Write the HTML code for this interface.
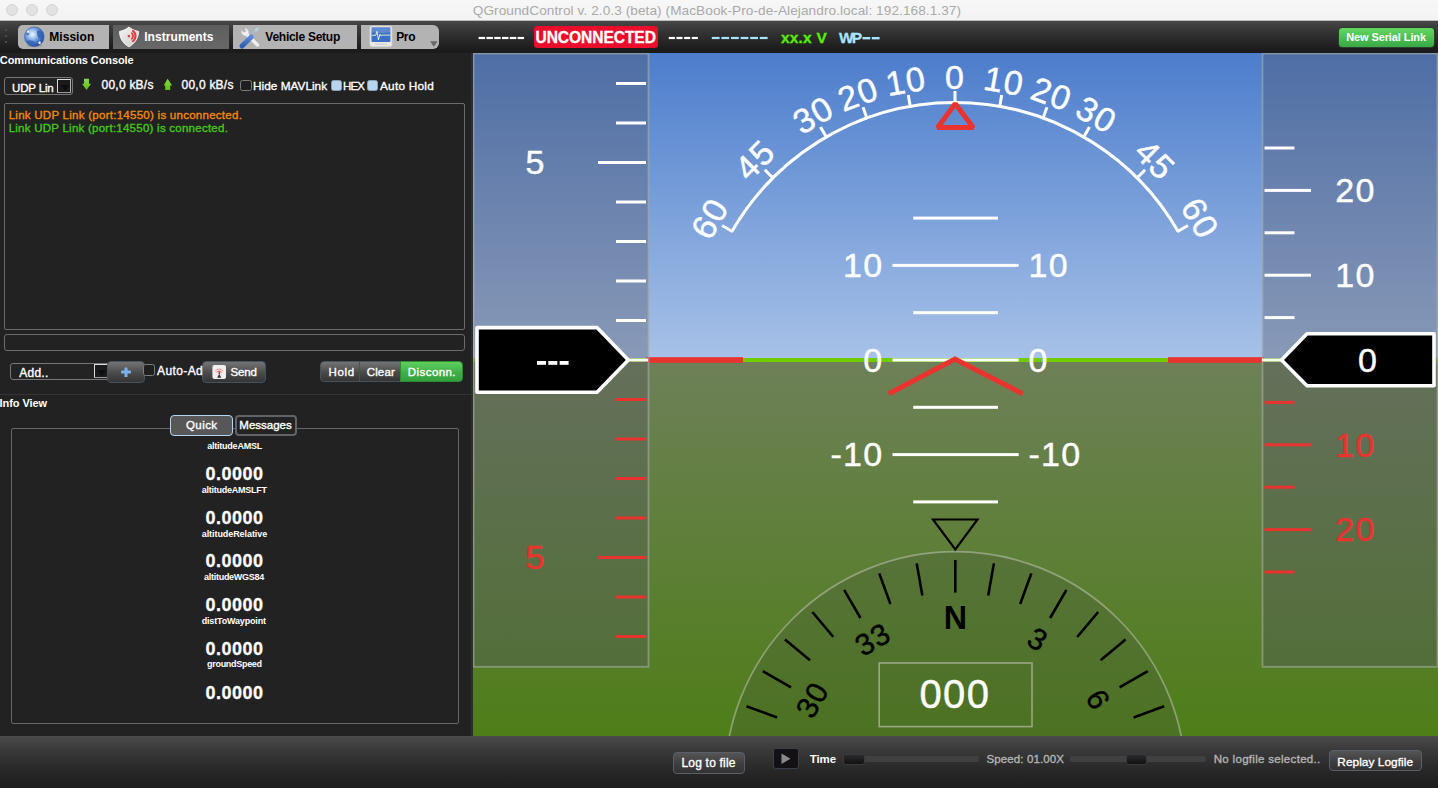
<!DOCTYPE html>
<html><head><meta charset="utf-8">
<style>
*{margin:0;padding:0;box-sizing:border-box}
html,body{width:1438px;height:788px;overflow:hidden;background:#222;font-family:"Liberation Sans",sans-serif}
.a{position:absolute}
#title{left:0;top:0;width:1438px;height:21px;background:linear-gradient(#f7f7f7,#f3f3f3);border-bottom:1px solid #bdbdbd}
.tl{width:12px;height:12px;border-radius:50%;background:#e2e2e2;border:1px solid #d3d3d3;top:4px}
#toolbar{left:0;top:21px;width:1438px;height:32px;background:linear-gradient(#474747,#333 35%,#1d1d1d 85%,#1a1a1a);}
.grip{left:5px;width:2px;height:2px;background:#4a4a4a}
.tab{top:25px;height:24px;background:#b3b3b3}
#left{left:0;top:53px;width:473px;height:683px;background:#222}
#bottom{left:0;top:736px;width:1438px;height:52px;background:linear-gradient(#4b4b4b,#3a3a3a 25%,#262626 70%,#1e1e1e)}
.box{border:1.2px solid #6c6c6c;border-radius:2px;background:#222}
.combo{border:1.5px solid #777;border-radius:3px;background:#232323}
.csq{border:1.5px solid #dcdcdc;border-bottom-color:#9a9a9a;border-right-color:#b0b0b0;background:#1a1a1a}
.tri{width:0;height:0;border-left:4px solid transparent;border-right:4px solid transparent;border-top:6px solid #0d0d0d}
.cb{border:1.3px solid #7c7c7c;border-radius:2.5px;background:#1f1f1f}
.cbf{border:1px solid #8aa0b4;border-radius:2.5px;background:#b9d6ee}
.btn{border:1px solid #46525c;border-radius:4px;background:linear-gradient(#747474,#4a4a4a 55%,#353535)}
.gbtn{border:1px solid #2f8a36;border-radius:4px;background:linear-gradient(#5fd05e,#3eb048 55%,#33a03c)}
.bbtn{border:1px solid #596068;border-radius:4px;background:linear-gradient(#555,#3c3c3c 60%,#333)}
</style></head><body>
<div id="title" class="a">
  <div class="a tl" style="left:6px"></div>
  <div class="a tl" style="left:26px"></div>
  <div class="a tl" style="left:46px"></div>
</div>
<div id="toolbar" class="a"></div>
<div class="a grip" style="top:29px"></div><div class="a grip" style="top:35px"></div><div class="a grip" style="top:41px"></div>
<div class="a tab" style="left:18px;width:91px;border-radius:5px 0 0 5px"></div>
<div class="a tab" style="left:113px;width:116px;background:linear-gradient(#5d5d5d,#686868)"></div>
<div class="a tab" style="left:233px;width:124px"></div>
<div class="a tab" style="left:361px;width:78px;border-radius:0 6px 6px 0"></div>
<div class="a" style="left:1337.5px;top:26.5px;width:97.5px;height:21px;border-radius:4px;border:1px solid #2c3c2e;background:linear-gradient(#66d662,#4cc052 50%,#3aa846)"></div>
<div class="a" style="left:534px;top:26px;width:124px;height:21.6px;border-radius:3.5px;background:#ea0d2c"></div>
<div id="left" class="a"></div>
<div class="a" style="left:470.8px;top:53px;width:2.2px;height:683px;background:#2e2e30"></div>
<!-- UDP combo -->
<div class="a combo" style="left:4.2px;top:77px;width:68.5px;height:17.7px"></div>
<div class="a csq" style="left:57px;top:79px;width:14px;height:14px"><div class="a tri" style="left:2.6px;top:4.5px"></div></div>
<!-- checkboxes -->
<div class="a cb" style="left:240px;top:79.6px;width:11.5px;height:11px"></div>
<div class="a cbf" style="left:330.5px;top:79.6px;width:11.2px;height:11px"></div>
<div class="a cbf" style="left:366.5px;top:79.6px;width:11px;height:11px"></div>
<!-- console -->
<div class="a box" style="left:4.3px;top:103.4px;width:460.5px;height:226.8px"></div>
<div class="a box" style="left:4.3px;top:334px;width:460.5px;height:17.4px;border-radius:3px"></div>
<!-- Add combo -->
<div class="a combo" style="left:10.3px;top:362.5px;width:100px;height:17px"></div>
<div class="a csq" style="left:94px;top:364px;width:14px;height:14px"><div class="a tri" style="left:2.6px;top:4.5px"></div></div>
<div class="a btn" style="left:107.3px;top:361.2px;width:37.4px;height:21.6px"></div>
<div class="a cb" style="left:143.3px;top:364.1px;width:11.6px;height:11.7px"></div>
<div class="a btn" style="left:202.2px;top:361.1px;width:63.5px;height:21.6px"></div>
<div class="a btn" style="left:320.4px;top:361.3px;width:39.5px;height:21.2px;border-radius:4px 0 0 4px"></div>
<div class="a btn" style="left:359.2px;top:361.3px;width:42px;height:21.2px;border-radius:0"></div>
<div class="a gbtn" style="left:400.1px;top:361.3px;width:62.7px;height:21.2px;border-radius:0 4px 4px 0"></div>
<!-- separator -->
<div class="a" style="left:0;top:394px;width:470.8px;height:1.2px;background:#343434"></div>
<!-- info frame -->
<div class="a box" style="left:10.5px;top:428px;width:448px;height:296px;border-color:#63676b"></div>
<div class="a" style="left:170.3px;top:415.3px;width:63.2px;height:20.3px;border:1.6px solid #b4d6f2;border-radius:4px;background:#575757"></div>
<div class="a" style="left:234.8px;top:415.3px;width:62.7px;height:20.3px;border:2px solid #606468;border-radius:4px;background:#232323"></div>
<svg class="a" style="left:0;top:0" width="1438" height="788" viewBox="0 0 1438 788" font-family="Liberation Sans, sans-serif">
<defs>
<linearGradient id="sky" x1="0" y1="53" x2="0" y2="360" gradientUnits="userSpaceOnUse"><stop offset="0" stop-color="#4c7dcc"/><stop offset="1" stop-color="#a8c2e8"/></linearGradient>
<linearGradient id="gnd" x1="0" y1="360" x2="0" y2="736" gradientUnits="userSpaceOnUse"><stop offset="0" stop-color="#6e8058"/><stop offset="1" stop-color="#4e7e18"/></linearGradient>
<clipPath id="hudclip"><rect x="473" y="53" width="965" height="683"/></clipPath>
</defs>
<g clip-path="url(#hudclip)">
<rect x="473" y="53" width="965" height="307" fill="url(#sky)"/>
<rect x="473" y="360" width="965" height="376" fill="url(#gnd)"/>
<rect x="473" y="358" width="965" height="4" fill="#70cc00"/>
<rect x="646" y="357.2" width="97" height="5.6" fill="#e8332f"/>
<rect x="1168" y="357.2" width="96" height="5.6" fill="#e8332f"/>
<rect x="913.2" y="500.40" width="84.8" height="3" fill="#ffffff"/>
<rect x="892.5" y="453.10" width="126.2" height="3" fill="#ffffff"/>
<g transform="translate(883.50,454.60) rotate(0.00) scale(1.0,1)"><text x="0" y="11.70" text-anchor="end" font-size="34" letter-spacing="1.3" font-weight="normal" fill="#ffffff" stroke="#ffffff" stroke-width="0.45">-10</text></g>
<g transform="translate(1028.50,454.60) rotate(0.00) scale(1.0,1)"><text x="0" y="11.70" text-anchor="start" font-size="34" letter-spacing="1.3" font-weight="normal" fill="#ffffff" stroke="#ffffff" stroke-width="0.45">-10</text></g>
<rect x="913.2" y="405.80" width="84.8" height="3" fill="#ffffff"/>
<rect x="892.5" y="358.50" width="126.2" height="3" fill="#ffffff"/>
<g transform="translate(883.50,360.00) rotate(0.00) scale(1.0,1)"><text x="0" y="11.70" text-anchor="end" font-size="34" letter-spacing="1.3" font-weight="normal" fill="#ffffff" stroke="#ffffff" stroke-width="0.45">0</text></g>
<g transform="translate(1028.50,360.00) rotate(0.00) scale(1.0,1)"><text x="0" y="11.70" text-anchor="start" font-size="34" letter-spacing="1.3" font-weight="normal" fill="#ffffff" stroke="#ffffff" stroke-width="0.45">0</text></g>
<rect x="913.2" y="311.20" width="84.8" height="3" fill="#ffffff"/>
<rect x="892.5" y="263.90" width="126.2" height="3" fill="#ffffff"/>
<g transform="translate(883.50,265.40) rotate(0.00) scale(1.0,1)"><text x="0" y="11.70" text-anchor="end" font-size="34" letter-spacing="1.3" font-weight="normal" fill="#ffffff" stroke="#ffffff" stroke-width="0.45">10</text></g>
<g transform="translate(1028.50,265.40) rotate(0.00) scale(1.0,1)"><text x="0" y="11.70" text-anchor="start" font-size="34" letter-spacing="1.3" font-weight="normal" fill="#ffffff" stroke="#ffffff" stroke-width="0.45">10</text></g>
<rect x="913.2" y="216.60" width="84.8" height="3" fill="#ffffff"/>
<polyline points="888.8,393.7 955,359 1022.4,393.7" fill="none" stroke="#e8332f" stroke-width="5"/>
<path d="M732.00,231.25 A257.5,257.5 0 0 1 1178.00,231.25" fill="none" stroke="#ffffff" stroke-width="3"/>
<line x1="732.86" y1="231.75" x2="722.04" y2="225.50" stroke="#ffffff" stroke-width="3"/>
<g transform="translate(709.91,218.50) rotate(-60.00) scale(1.0,1)"><text x="0" y="11.70" text-anchor="middle" font-size="34" letter-spacing="1.3" font-weight="normal" fill="#ffffff" stroke="#ffffff" stroke-width="0.45">60</text></g>
<line x1="773.63" y1="178.63" x2="764.79" y2="169.79" stroke="#ffffff" stroke-width="3"/>
<g transform="translate(754.89,159.89) rotate(-45.00) scale(1.0,1)"><text x="0" y="11.70" text-anchor="middle" font-size="34" letter-spacing="1.3" font-weight="normal" fill="#ffffff" stroke="#ffffff" stroke-width="0.45">45</text></g>
<line x1="826.75" y1="137.86" x2="820.50" y2="127.04" stroke="#ffffff" stroke-width="3"/>
<g transform="translate(813.50,114.91) rotate(-30.00) scale(1.0,1)"><text x="0" y="11.70" text-anchor="middle" font-size="34" letter-spacing="1.3" font-weight="normal" fill="#ffffff" stroke="#ffffff" stroke-width="0.45">30</text></g>
<line x1="867.27" y1="118.97" x2="863.00" y2="107.22" stroke="#ffffff" stroke-width="3"/>
<g transform="translate(858.21,94.07) rotate(-20.00) scale(1.0,1)"><text x="0" y="11.70" text-anchor="middle" font-size="34" letter-spacing="1.3" font-weight="normal" fill="#ffffff" stroke="#ffffff" stroke-width="0.45">20</text></g>
<line x1="910.46" y1="107.40" x2="908.29" y2="95.09" stroke="#ffffff" stroke-width="3"/>
<g transform="translate(905.86,81.30) rotate(-10.00) scale(1.0,1)"><text x="0" y="11.70" text-anchor="middle" font-size="34" letter-spacing="1.3" font-weight="normal" fill="#ffffff" stroke="#ffffff" stroke-width="0.45">10</text></g>
<line x1="955.00" y1="103.50" x2="955.00" y2="91.00" stroke="#ffffff" stroke-width="3"/>
<g transform="translate(955.00,77.00) rotate(0.00) scale(1.0,1)"><text x="0" y="11.70" text-anchor="middle" font-size="34" letter-spacing="1.3" font-weight="normal" fill="#ffffff" stroke="#ffffff" stroke-width="0.45">0</text></g>
<line x1="999.54" y1="107.40" x2="1001.71" y2="95.09" stroke="#ffffff" stroke-width="3"/>
<g transform="translate(1004.14,81.30) rotate(10.00) scale(1.0,1)"><text x="0" y="11.70" text-anchor="middle" font-size="34" letter-spacing="1.3" font-weight="normal" fill="#ffffff" stroke="#ffffff" stroke-width="0.45">10</text></g>
<line x1="1042.73" y1="118.97" x2="1047.00" y2="107.22" stroke="#ffffff" stroke-width="3"/>
<g transform="translate(1051.79,94.07) rotate(20.00) scale(1.0,1)"><text x="0" y="11.70" text-anchor="middle" font-size="34" letter-spacing="1.3" font-weight="normal" fill="#ffffff" stroke="#ffffff" stroke-width="0.45">20</text></g>
<line x1="1083.25" y1="137.86" x2="1089.50" y2="127.04" stroke="#ffffff" stroke-width="3"/>
<g transform="translate(1096.50,114.91) rotate(30.00) scale(1.0,1)"><text x="0" y="11.70" text-anchor="middle" font-size="34" letter-spacing="1.3" font-weight="normal" fill="#ffffff" stroke="#ffffff" stroke-width="0.45">30</text></g>
<line x1="1136.37" y1="178.63" x2="1145.21" y2="169.79" stroke="#ffffff" stroke-width="3"/>
<g transform="translate(1155.11,159.89) rotate(45.00) scale(1.0,1)"><text x="0" y="11.70" text-anchor="middle" font-size="34" letter-spacing="1.3" font-weight="normal" fill="#ffffff" stroke="#ffffff" stroke-width="0.45">45</text></g>
<line x1="1177.14" y1="231.75" x2="1187.96" y2="225.50" stroke="#ffffff" stroke-width="3"/>
<g transform="translate(1200.09,218.50) rotate(60.00) scale(1.0,1)"><text x="0" y="11.70" text-anchor="middle" font-size="34" letter-spacing="1.3" font-weight="normal" fill="#ffffff" stroke="#ffffff" stroke-width="0.45">60</text></g>
<polygon points="955.3,103.8 937.6,127.4 973.2,127.4" fill="none" stroke="#e8332f" stroke-width="5" stroke-linejoin="bevel"/>
<rect x="473.5" y="53.5" width="175" height="613.3" fill="rgba(83,84,97,0.36)" stroke="rgba(165,172,165,0.62)" stroke-width="1.8"/>
<rect x="1262.5" y="53.5" width="175" height="613.3" fill="rgba(83,84,97,0.36)" stroke="rgba(165,172,165,0.62)" stroke-width="1.8"/>
<rect x="616" y="319.00" width="30" height="3" fill="#ffffff"/>
<rect x="616" y="398.00" width="30" height="3" fill="#e8332f"/>
<rect x="616" y="279.50" width="30" height="3" fill="#ffffff"/>
<rect x="616" y="437.50" width="30" height="3" fill="#e8332f"/>
<rect x="616" y="240.00" width="30" height="3" fill="#ffffff"/>
<rect x="616" y="477.00" width="30" height="3" fill="#e8332f"/>
<rect x="616" y="200.50" width="30" height="3" fill="#ffffff"/>
<rect x="616" y="516.50" width="30" height="3" fill="#e8332f"/>
<rect x="598" y="161.00" width="48" height="3" fill="#ffffff"/>
<g transform="translate(535.50,162.50) rotate(0.00) scale(1.0,1)"><text x="0" y="11.70" text-anchor="middle" font-size="34" letter-spacing="1.3" font-weight="normal" fill="#ffffff" stroke="#ffffff" stroke-width="0.45">5</text></g>
<rect x="598" y="556.00" width="48" height="3" fill="#e8332f"/>
<g transform="translate(535.50,557.50) rotate(0.00) scale(1.0,1)"><text x="0" y="11.70" text-anchor="middle" font-size="34" letter-spacing="1.3" font-weight="normal" fill="#e8332f" stroke="#e8332f" stroke-width="0.45">5</text></g>
<rect x="616" y="121.50" width="30" height="3" fill="#ffffff"/>
<rect x="616" y="595.50" width="30" height="3" fill="#e8332f"/>
<rect x="616" y="82.00" width="30" height="3" fill="#ffffff"/>
<rect x="616" y="635.00" width="30" height="3" fill="#e8332f"/>
<rect x="1264.5" y="316.10" width="30" height="3" fill="#ffffff"/>
<rect x="1264.5" y="400.90" width="30" height="3" fill="#e8332f"/>
<rect x="1264.5" y="273.70" width="46.5" height="3" fill="#ffffff"/>
<g transform="translate(1355.50,275.20) rotate(0.00) scale(1.0,1)"><text x="0" y="11.70" text-anchor="middle" font-size="34" letter-spacing="1.3" font-weight="normal" fill="#ffffff" stroke="#ffffff" stroke-width="0.45">10</text></g>
<rect x="1264.5" y="443.30" width="46.5" height="3" fill="#e8332f"/>
<g transform="translate(1355.50,444.80) rotate(0.00) scale(1.0,1)"><text x="0" y="11.70" text-anchor="middle" font-size="34" letter-spacing="1.3" font-weight="normal" fill="#e8332f" stroke="#e8332f" stroke-width="0.45">10</text></g>
<rect x="1264.5" y="231.30" width="30" height="3" fill="#ffffff"/>
<rect x="1264.5" y="485.70" width="30" height="3" fill="#e8332f"/>
<rect x="1264.5" y="188.90" width="46.5" height="3" fill="#ffffff"/>
<g transform="translate(1355.50,190.40) rotate(0.00) scale(1.0,1)"><text x="0" y="11.70" text-anchor="middle" font-size="34" letter-spacing="1.3" font-weight="normal" fill="#ffffff" stroke="#ffffff" stroke-width="0.45">20</text></g>
<rect x="1264.5" y="528.10" width="46.5" height="3" fill="#e8332f"/>
<g transform="translate(1355.50,529.60) rotate(0.00) scale(1.0,1)"><text x="0" y="11.70" text-anchor="middle" font-size="34" letter-spacing="1.3" font-weight="normal" fill="#e8332f" stroke="#e8332f" stroke-width="0.45">20</text></g>
<rect x="1264.5" y="146.50" width="30" height="3" fill="#ffffff"/>
<rect x="1264.5" y="570.50" width="30" height="3" fill="#e8332f"/>
<rect x="629" y="358.5" width="19" height="3" fill="#f4faee"/>
<rect x="1262" y="358.5" width="19" height="3" fill="#f4faee"/>
<path d="M477,327.6 L597,327.6 L628.3,360 L597,392.3 L477,392.3 Z" fill="#000" stroke="#ffffff" stroke-width="3.6" stroke-linejoin="round"/>
<rect x="537.00" y="361" width="9" height="3.8" fill="#ffffff"/>
<rect x="548.30" y="361" width="9" height="3.8" fill="#ffffff"/>
<rect x="559.60" y="361" width="9" height="3.8" fill="#ffffff"/>
<path d="M1281.5,360 L1307,333.8 L1434,333.8 L1434,385.8 L1307,385.8 Z" fill="#000" stroke="#ffffff" stroke-width="3.6" stroke-linejoin="round"/>
<g transform="translate(1368.00,360.00) rotate(0.00) scale(1.0,1)"><text x="0" y="11.70" text-anchor="middle" font-size="34" letter-spacing="1.3" font-weight="normal" fill="#ffffff" stroke="#ffffff" stroke-width="0.45">0</text></g>
<circle cx="955.3" cy="782.3" r="230.6" fill="rgba(70,75,70,0.22)" stroke="rgba(190,196,180,0.55)" stroke-width="1.7"/>
<line x1="765.60" y1="782.30" x2="733.00" y2="782.30" stroke="#000" stroke-width="2.6"/>
<line x1="768.48" y1="749.36" x2="736.38" y2="743.70" stroke="#000" stroke-width="2.6"/>
<line x1="777.04" y1="717.42" x2="746.41" y2="706.27" stroke="#000" stroke-width="2.6"/>
<line x1="791.01" y1="687.45" x2="762.78" y2="671.15" stroke="#000" stroke-width="2.6"/>
<line x1="809.98" y1="660.36" x2="785.01" y2="639.41" stroke="#000" stroke-width="2.6"/>
<line x1="833.36" y1="636.98" x2="812.41" y2="612.01" stroke="#000" stroke-width="2.6"/>
<line x1="860.45" y1="618.01" x2="844.15" y2="589.78" stroke="#000" stroke-width="2.6"/>
<line x1="890.42" y1="604.04" x2="879.27" y2="573.41" stroke="#000" stroke-width="2.6"/>
<line x1="922.36" y1="595.48" x2="916.70" y2="563.38" stroke="#000" stroke-width="2.6"/>
<line x1="955.30" y1="592.60" x2="955.30" y2="560.00" stroke="#000" stroke-width="2.6"/>
<line x1="988.24" y1="595.48" x2="993.90" y2="563.38" stroke="#000" stroke-width="2.6"/>
<line x1="1020.18" y1="604.04" x2="1031.33" y2="573.41" stroke="#000" stroke-width="2.6"/>
<line x1="1050.15" y1="618.01" x2="1066.45" y2="589.78" stroke="#000" stroke-width="2.6"/>
<line x1="1077.24" y1="636.98" x2="1098.19" y2="612.01" stroke="#000" stroke-width="2.6"/>
<line x1="1100.62" y1="660.36" x2="1125.59" y2="639.41" stroke="#000" stroke-width="2.6"/>
<line x1="1119.59" y1="687.45" x2="1147.82" y2="671.15" stroke="#000" stroke-width="2.6"/>
<line x1="1133.56" y1="717.42" x2="1164.19" y2="706.27" stroke="#000" stroke-width="2.6"/>
<line x1="1142.12" y1="749.36" x2="1174.22" y2="743.70" stroke="#000" stroke-width="2.6"/>
<line x1="1145.00" y1="782.30" x2="1177.60" y2="782.30" stroke="#000" stroke-width="2.6"/>
<g transform="translate(812.41,699.80) rotate(-60.00) scale(1.0,1)"><text x="0" y="10.32" text-anchor="middle" font-size="30" letter-spacing="1.0" font-weight="normal" fill="#000" stroke="#000" stroke-width="0.45">30</text></g>
<g transform="translate(872.80,639.41) rotate(-30.00) scale(1.0,1)"><text x="0" y="10.32" text-anchor="middle" font-size="30" letter-spacing="1.0" font-weight="normal" fill="#000" stroke="#000" stroke-width="0.45">33</text></g>
<g transform="translate(955.30,617.30) rotate(0.00) scale(0.95,1)"><text x="0" y="11.70" text-anchor="middle" font-size="34" letter-spacing="0" font-weight="bold" fill="#000">N</text></g>
<g transform="translate(1037.80,639.41) rotate(30.00) scale(1.0,1)"><text x="0" y="10.32" text-anchor="middle" font-size="30" letter-spacing="1.0" font-weight="normal" fill="#000" stroke="#000" stroke-width="0.45">3</text></g>
<g transform="translate(1098.19,699.80) rotate(60.00) scale(1.0,1)"><text x="0" y="10.32" text-anchor="middle" font-size="30" letter-spacing="1.0" font-weight="normal" fill="#000" stroke="#000" stroke-width="0.45">6</text></g>
<polygon points="933,519.5 977.5,519.5 955.3,549.5" fill="none" stroke="#000" stroke-width="2.2"/>
<rect x="879.2" y="663" width="152.8" height="63.6" fill="none" stroke="rgba(185,190,175,0.7)" stroke-width="1.6"/>
<g transform="translate(955.00,694.00) rotate(0.00) scale(1.0,1)"><text x="0" y="13.76" text-anchor="middle" font-size="40" letter-spacing="1.5" font-weight="normal" fill="#ffffff" stroke="#ffffff" stroke-width="0.45">000</text></g>
</g></svg><div id="bottom" class="a"></div>
<div class="a bbtn" style="left:673.2px;top:752.2px;width:71.5px;height:21.6px"></div>
<div class="a" style="left:772.5px;top:748.2px;width:26px;height:21.2px;border:1px solid #3a4048;border-radius:3px;background:#121214"></div>
<div class="a" style="left:843px;top:755.8px;width:135.7px;height:6.5px;border-radius:2px;background:#404040"></div>
<div class="a" style="left:843px;top:753.8px;width:21.6px;height:11.2px;border-radius:3px;border:1px solid #3a3a3a;background:linear-gradient(#2a2a2c,#111114)"></div>
<div class="a" style="left:1070px;top:755.8px;width:136px;height:6.5px;border-radius:2px;background:#404040"></div>
<div class="a" style="left:1125.5px;top:753.8px;width:21.1px;height:11.2px;border-radius:3px;border:1px solid #3a3a3a;background:linear-gradient(#2a2a2c,#111114)"></div>
<div class="a bbtn" style="left:1329.4px;top:750.2px;width:92.3px;height:21px"></div>
<svg class="a" style="left:0;top:0" width="1438" height="788" viewBox="0 0 1438 788">
<defs>
<radialGradient id="globeg" cx="0.4" cy="0.38" r="0.65">
<stop offset="0" stop-color="#eef5ff"/><stop offset="0.35" stop-color="#9cc0ec"/><stop offset="0.75" stop-color="#3a6cc0"/><stop offset="1" stop-color="#24489a"/>
</radialGradient>
<linearGradient id="shg" x1="0" y1="0" x2="1" y2="1"><stop offset="0" stop-color="#f4f4f4"/><stop offset="1" stop-color="#c9cbca"/></linearGradient>
<linearGradient id="scr" x1="0" y1="0" x2="0" y2="1"><stop offset="0" stop-color="#5a8ad8"/><stop offset="1" stop-color="#2f5eb0"/></linearGradient>
<linearGradient id="garr" x1="0" y1="0" x2="0" y2="1"><stop offset="0" stop-color="#86d84a"/><stop offset="1" stop-color="#5cc010"/></linearGradient>
</defs>
<!-- globe -->
<ellipse cx="34.6" cy="45.6" rx="8" ry="1.6" fill="rgba(0,0,0,0.12)"/>
<circle cx="34.3" cy="36.7" r="9.8" fill="url(#globeg)" stroke="#3b5aa0" stroke-width="0.6"/>
<path d="M37.5,30.5 C41,30 43.5,33 43.6,36 C43,38.5 40,39 38.5,37.5 C37.5,35.5 36,33 37.5,30.5Z" fill="#2f62b4" opacity="0.85"/>
<path d="M27,41 C29,39.5 33,40.5 35,42.5 C35.5,44.5 33,46 30,45.5 C28,44.5 26.5,43 27,41Z" fill="#3266b6" opacity="0.85"/>
<path d="M25.5,34 C27,32.5 29,33 29.5,34.5 C28.5,35.5 26.5,35.5 25.5,34Z" fill="#3a6cc0" opacity="0.8"/>
<circle cx="39.6" cy="42.7" r="1.2" fill="#fff"/>
<circle cx="28.2" cy="31.4" r="1" fill="#fff" opacity="0.9"/>
<!-- shield -->
<path d="M128.9,27.1 C125.8,29.6 122.6,31 119.5,31.4 C119.6,38 123,43.6 128.9,46.8 C134.8,43.6 138.4,38 138.6,31.4 C135.4,31 132.2,29.6 128.9,27.1Z" fill="url(#shg)" stroke="#fafafa" stroke-width="0.9"/>
<rect x="127.8" y="35" width="2.3" height="2.3" fill="#e84040"/>
<path d="M131.3,32.7 A4,4 0 0 1 131.3,39.3" fill="none" stroke="#e84040" stroke-width="1.9"/>
<path d="M132.3,30.4 A6.5,6.5 0 0 1 132.3,41.6" fill="none" stroke="#ec3a3a" stroke-width="2"/>
<!-- wrench + screwdriver -->
<path d="M246,33.5 L257.5,45" stroke="#efefef" stroke-width="3.4" stroke-linecap="round"/>
<path d="M241.5,30.5 C241,33 242.5,35.5 245.5,35.5 C247.5,35.5 248.5,34 248.5,32.5 C248.5,30 246.5,28.2 245,28.5 L246.2,31.8 L244,32.5 Z" fill="#f2f2f2" stroke="#d8d8d8" stroke-width="0.5"/>
<path d="M252.5,33.5 L257.5,28.5" stroke="#a9c0dc" stroke-width="1.4"/>
<ellipse cx="256.8" cy="29.5" rx="1.6" ry="2.4" transform="rotate(45 256.8 29.5)" fill="#b8cce4"/>
<path d="M242,46 L251.2,37" stroke="url(#scr)" stroke-width="5" stroke-linecap="round"/>
<!-- monitor -->
<rect x="369.8" y="25.9" width="22.3" height="20.9" rx="2" fill="#e9e9e6" stroke="#c4c4c2" stroke-width="0.6"/>
<rect x="371.5" y="27.3" width="18.9" height="14.7" rx="0.8" fill="#3c70c6"/>
<path d="M371.5,27.3 h18.9 v5 q-9,1.5 -18.9,0 z" fill="rgba(255,255,255,0.18)"/>
<path d="M372,35.3 L375.8,35.3 L377,31.3 L378.4,39.8 L380,34.2 L381,36 L382.2,35.1 L390,35.1" fill="none" stroke="#e8f8d8" stroke-width="0.9"/>
<rect x="375" y="43.3" width="12" height="1.6" fill="#d4d4d2"/>
<path d="M430,41.2 L437.7,41.2 L433.9,46.8 Z" fill="#676767"/>
<!-- green arrows -->
<path d="M84,78.7 h5 v5 h2 L86.5,89.9 L82,83.7 h2 Z" fill="url(#garr)"/>
<path d="M167.6,78.8 L172.2,85.4 h-2 V89.9 h-5 V85.4 h-1.5 Z" fill="url(#garr)"/>
<!-- plus -->
<rect x="121.1" y="370.6" width="9.8" height="3" rx="0.5" fill="#7eb0ee"/>
<rect x="124.5" y="367.6" width="3" height="9.3" rx="0.5" fill="#7eb0ee"/>
<!-- send icon -->
<rect x="212.4" y="365" width="13.6" height="13.9" rx="2" fill="#efefef"/>
<path d="M215.2,371 A5,5 0 0 1 223.2,371" fill="none" stroke="#f08080" stroke-width="0.9"/>
<path d="M216.8,372.3 A3,3 0 0 1 221.6,372.3" fill="none" stroke="#e85050" stroke-width="1"/>
<rect x="218.5" y="371.5" width="1.6" height="2.6" fill="#e03030"/>
<path d="M217.2,377.8 L219.2,373.8 L221.3,377.8 Z" fill="#303030"/>
<!-- play -->
<path d="M781.5,753.5 L790.5,758.8 L781.5,764 Z" fill="#8a8a8a"/>
<rect x="478.6" y="36.9" width="6.5" height="2.2" fill="#fff"/>
<rect x="486.4" y="36.9" width="6.5" height="2.2" fill="#fff"/>
<rect x="494.2" y="36.9" width="6.5" height="2.2" fill="#fff"/>
<rect x="502.0" y="36.9" width="6.5" height="2.2" fill="#fff"/>
<rect x="509.8" y="36.9" width="6.5" height="2.2" fill="#fff"/>
<rect x="517.6" y="36.9" width="6.5" height="2.2" fill="#fff"/>
<rect x="668.8" y="36.9" width="6.1" height="2.2" fill="#fff"/>
<rect x="676.4" y="36.9" width="6.1" height="2.2" fill="#fff"/>
<rect x="684.1" y="36.9" width="6.1" height="2.2" fill="#fff"/>
<rect x="691.8" y="36.9" width="6.1" height="2.2" fill="#fff"/>
<rect x="711.8" y="36.9" width="7.8" height="2.2" fill="#a8e4ff"/>
<rect x="721.4" y="36.9" width="7.8" height="2.2" fill="#a8e4ff"/>
<rect x="731.0" y="36.9" width="7.8" height="2.2" fill="#a8e4ff"/>
<rect x="740.6" y="36.9" width="7.8" height="2.2" fill="#a8e4ff"/>
<rect x="750.2" y="36.9" width="7.8" height="2.2" fill="#a8e4ff"/>
<rect x="759.8" y="36.9" width="7.8" height="2.2" fill="#a8e4ff"/>
<rect x="862.5" y="37" width="7.8" height="2.4" fill="#a8e4ff"/>
<rect x="871.8" y="37" width="7.8" height="2.4" fill="#a8e4ff"/>
</svg>
<svg class="a" style="left:0;top:0" width="1438" height="788" viewBox="0 0 1438 788" font-family="Liberation Sans, sans-serif">
<text x="472.76" y="14.70" font-size="13.6" font-weight="normal" letter-spacing="0.085" fill="#a9a9a9" xml:space="preserve">QGroundControl v. 2.0.3 (beta) (MacBook-Pro-de-Alejandro.local: 192.168.1.37)</text>
<text x="49.20" y="41.00" font-size="12" font-weight="bold" letter-spacing="0.063" fill="#000" xml:space="preserve">Mission</text>
<text x="144.20" y="41.00" font-size="12" font-weight="bold" letter-spacing="0.062" fill="#fff" xml:space="preserve">Instruments</text>
<text x="265.32" y="41.00" font-size="12" font-weight="bold" letter-spacing="-0.260" fill="#000" xml:space="preserve">Vehicle Setup</text>
<text x="396.20" y="41.00" font-size="12" font-weight="bold" letter-spacing="-0.365" fill="#000" xml:space="preserve">Pro</text>
<text x="535.46" y="43.30" font-size="15.6" font-weight="bold" letter-spacing="-0.084" fill="#fff" stroke="#fff" stroke-width="0.3" xml:space="preserve">UNCONNECTED</text>
<text x="780.89" y="42.80" font-size="15.5" font-weight="bold" letter-spacing="0.220" fill="#58f000" stroke="#58f000" stroke-width="0.3" xml:space="preserve">xx.x V</text>
<text x="838.88" y="42.70" font-size="15.5" font-weight="bold" letter-spacing="-1.820" fill="#a8e4ff" stroke="#a8e4ff" stroke-width="0.3" xml:space="preserve">WP</text>
<text x="1346.16" y="40.90" font-size="11" font-weight="bold" letter-spacing="-0.099" fill="#fff" xml:space="preserve">New Serial Link</text>
<text x="-0.15" y="64.00" font-size="11" font-weight="bold" letter-spacing="-0.088" fill="#fff" xml:space="preserve">Communications Console</text>
<text x="12.01" y="92.10" font-size="11.5" font-weight="normal" letter-spacing="-0.148" fill="#fff" stroke="#fff" stroke-width="0.35" xml:space="preserve">UDP Lin</text>
<text x="101.53" y="88.80" font-size="12" font-weight="normal" letter-spacing="0.235" fill="#fff" stroke="#fff" stroke-width="0.35" xml:space="preserve">00,0 kB/s</text>
<text x="181.53" y="88.80" font-size="12" font-weight="normal" letter-spacing="0.235" fill="#fff" stroke="#fff" stroke-width="0.35" xml:space="preserve">00,0 kB/s</text>
<text x="253.03" y="90.00" font-size="11.8" font-weight="normal" letter-spacing="0.017" fill="#fff" stroke="#fff" stroke-width="0.35" xml:space="preserve">Hide MAVLink</text>
<text x="343.06" y="90.00" font-size="11.5" font-weight="normal" letter-spacing="-0.830" fill="#fff" stroke="#fff" stroke-width="0.35" xml:space="preserve">HEX</text>
<text x="379.98" y="90.00" font-size="11.8" font-weight="normal" letter-spacing="0.245" fill="#fff" stroke="#fff" stroke-width="0.35" xml:space="preserve">Auto Hold</text>
<text x="8.66" y="118.90" font-size="11.5" font-weight="normal" letter-spacing="0.267" fill="#f38a0c" stroke="#f38a0c" stroke-width="0.35" xml:space="preserve">Link UDP Link (port:14550) is unconnected.</text>
<text x="8.66" y="132.00" font-size="11.5" font-weight="normal" letter-spacing="0.249" fill="#46c81a" stroke="#46c81a" stroke-width="0.35" xml:space="preserve">Link UDP Link (port:14550) is connected.</text>
<text x="19.18" y="376.70" font-size="12" font-weight="normal" letter-spacing="0.275" fill="#fff" stroke="#fff" stroke-width="0.35" xml:space="preserve">Add..</text>
<text x="156.98" y="374.70" font-size="12" font-weight="normal" letter-spacing="0.407" fill="#fff" stroke="#fff" stroke-width="0.35" xml:space="preserve">Auto-Ad</text>
<text x="230.38" y="375.90" font-size="11.5" font-weight="normal" letter-spacing="-0.097" fill="#fff" stroke="#fff" stroke-width="0.35" xml:space="preserve">Send</text>
<text x="328.56" y="375.70" font-size="11.5" font-weight="normal" letter-spacing="0.610" fill="#fff" stroke="#fff" stroke-width="0.35" xml:space="preserve">Hold</text>
<text x="366.72" y="375.70" font-size="11.5" font-weight="normal" letter-spacing="0.147" fill="#fff" stroke="#fff" stroke-width="0.35" xml:space="preserve">Clear</text>
<text x="407.86" y="375.70" font-size="11.5" font-weight="normal" letter-spacing="0.421" fill="#fff" stroke="#fff" stroke-width="0.35" xml:space="preserve">Disconn.</text>
<text x="-0.44" y="406.70" font-size="11" font-weight="bold" letter-spacing="-0.071" fill="#fff" xml:space="preserve">Info View</text>
<text x="185.96" y="429.40" font-size="11.5" font-weight="normal" letter-spacing="0.433" fill="#fff" stroke="#fff" stroke-width="0.35" xml:space="preserve">Quick</text>
<text x="239.36" y="429.40" font-size="11.5" font-weight="normal" letter-spacing="-0.007" fill="#fff" stroke="#fff" stroke-width="0.35" xml:space="preserve">Messages</text>
<text x="681.42" y="766.70" font-size="12" font-weight="normal" letter-spacing="0.208" fill="#fff" stroke="#fff" stroke-width="0.35" xml:space="preserve">Log to file</text>
<text x="809.87" y="763.00" font-size="11.5" font-weight="bold" letter-spacing="-0.140" fill="#fff" xml:space="preserve">Time</text>
<text x="986.48" y="763.00" font-size="11.5" font-weight="normal" letter-spacing="0.122" fill="#b4b4b4" stroke="#b4b4b4" stroke-width="0.35" xml:space="preserve">Speed: 01.00X</text>
<text x="1213.76" y="763.00" font-size="11.5" font-weight="normal" letter-spacing="0.306" fill="#b4b4b4" stroke="#b4b4b4" stroke-width="0.35" xml:space="preserve">No logfile selected..</text>
<text x="1337.33" y="765.50" font-size="11.8" font-weight="normal" letter-spacing="0.070" fill="#fff" stroke="#fff" stroke-width="0.35" xml:space="preserve">Replay Logfile</text>
<text x="207.14" y="448.60" font-size="9" font-weight="bold" letter-spacing="-0.215" fill="#fff" xml:space="preserve">altitudeAMSL</text>
<text x="201.74" y="492.60" font-size="9" font-weight="bold" letter-spacing="-0.248" fill="#fff" xml:space="preserve">altitudeAMSLFT</text>
<text x="201.74" y="536.50" font-size="9" font-weight="bold" letter-spacing="-0.070" fill="#fff" xml:space="preserve">altitudeRelative</text>
<text x="204.04" y="579.60" font-size="9" font-weight="bold" letter-spacing="-0.275" fill="#fff" xml:space="preserve">altitudeWGS84</text>
<text x="201.63" y="623.60" font-size="9" font-weight="bold" letter-spacing="-0.162" fill="#fff" xml:space="preserve">distToWaypoint</text>
<text x="207.03" y="667.00" font-size="9" font-weight="bold" letter-spacing="-0.294" fill="#fff" xml:space="preserve">groundSpeed</text>
<text x="205.59" y="479.70" font-size="18" font-weight="bold" letter-spacing="0.460" fill="#fff" stroke="#fff" stroke-width="0.3" xml:space="preserve">0.0000</text>
<text x="205.59" y="523.50" font-size="18" font-weight="bold" letter-spacing="0.460" fill="#fff" stroke="#fff" stroke-width="0.3" xml:space="preserve">0.0000</text>
<text x="205.59" y="567.30" font-size="18" font-weight="bold" letter-spacing="0.460" fill="#fff" stroke="#fff" stroke-width="0.3" xml:space="preserve">0.0000</text>
<text x="205.59" y="611.10" font-size="18" font-weight="bold" letter-spacing="0.460" fill="#fff" stroke="#fff" stroke-width="0.3" xml:space="preserve">0.0000</text>
<text x="205.59" y="654.90" font-size="18" font-weight="bold" letter-spacing="0.460" fill="#fff" stroke="#fff" stroke-width="0.3" xml:space="preserve">0.0000</text>
<text x="205.59" y="698.70" font-size="18" font-weight="bold" letter-spacing="0.460" fill="#fff" stroke="#fff" stroke-width="0.3" xml:space="preserve">0.0000</text>
</svg>
</body></html>
